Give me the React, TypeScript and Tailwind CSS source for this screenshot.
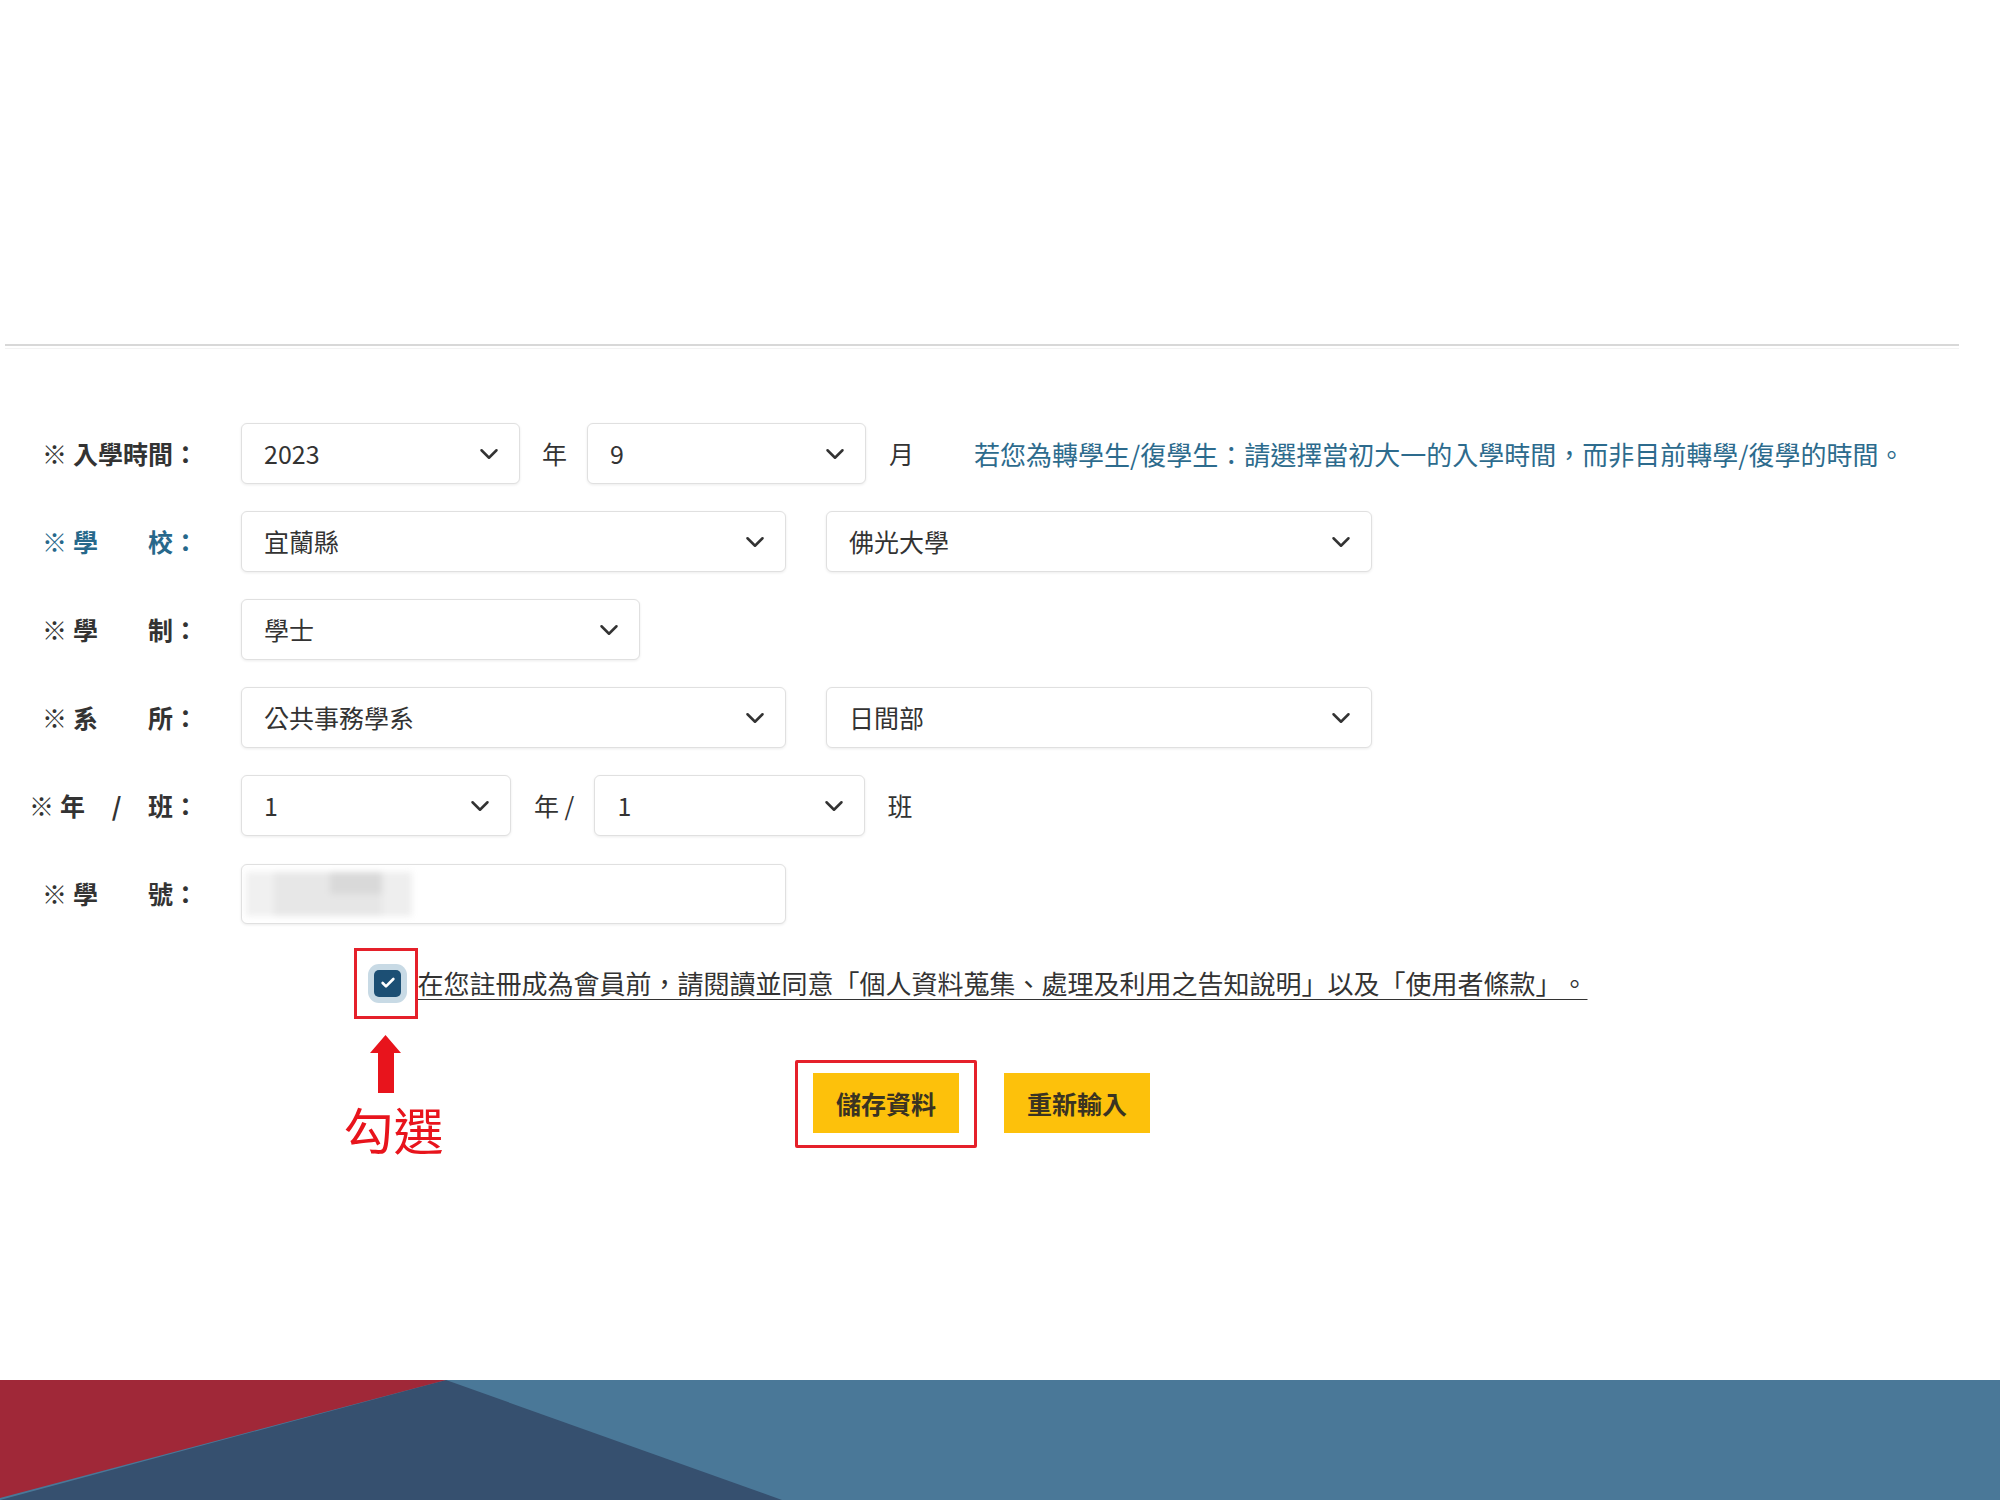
import { Check, ChevronDown } from "lucide-react";

function Select({ value, className }: { value: string; className: string }) {
  return (
    <div
      className={`flex h-[61px] items-center justify-between rounded-[6px] border border-[#e0e0e0] bg-white pr-[15px] pl-[22px] shadow-[0_1px_3px_rgba(0,0,0,0.08)] ${className}`}
    >
      <span className="text-[#333] leading-none">{value}</span>
      <ChevronDown className="text-[#333]" size={30} strokeWidth={2} />
    </div>
  );
}

function Label({ children, color = "text-[#333]" }: { children: React.ReactNode; color?: string }) {
  return (
    <div className={`flex w-[198px] shrink-0 items-center justify-end font-bold leading-none ${color}`}>
      <span>※</span>
      <span className="ml-[6px] flex items-center">{children}</span>
      <span>：</span>
    </div>
  );
}

function Spread({ items, w }: { items: string[]; w: string }) {
  return (
    <span className={`flex justify-between ${w}`}>
      {items.map((t) => (
        <span key={t}>{t}</span>
      ))}
    </span>
  );
}

export default function App() {
  return (
    <div className="flex h-[1500px] w-[2000px] flex-col bg-white font-['Noto_Sans_CJK_TC','Noto_Sans',sans-serif] text-[25px] text-[#333] [text-spacing-trim:space-all]">
      <div className="h-[344px] shrink-0" />
      <div className="ml-[5px] h-[2px] w-[1954px] bg-[#d8d8d8]" />
      <div className="mt-[2px] ml-[5px] h-px w-[1954px] bg-[#f3f3f3]" />

      {/* form rows */}
      <div className="mt-[74px] flex flex-col gap-[27px]">
        <div className="flex h-[61px] items-center">
          <Label>入學時間</Label>
          <Select className="ml-[43px] w-[279px]" value="2023" />
          <span className="ml-[22px] leading-none">年</span>
          <Select className="ml-[20px] w-[279px]" value="9" />
          <span className="ml-[23px] leading-none">月</span>
          <span className="ml-[60px] text-[#2d6b8d] text-[26px] leading-none">
            若您為轉學生/復學生：請選擇當初大一的入學時間，而非目前轉學/復學的時間。
          </span>
        </div>

        <div className="flex h-[61px] items-center">
          <Label color="text-[#27688b]">
            <Spread items={["學", "校"]} w="w-[100px]" />
          </Label>
          <Select className="ml-[43px] w-[545px]" value="宜蘭縣" />
          <Select className="ml-[40px] w-[546px]" value="佛光大學" />
        </div>

        <div className="flex h-[61px] items-center">
          <Label>
            <Spread items={["學", "制"]} w="w-[100px]" />
          </Label>
          <Select className="ml-[43px] w-[399px]" value="學士" />
        </div>

        <div className="flex h-[61px] items-center">
          <Label>
            <Spread items={["系", "所"]} w="w-[100px]" />
          </Label>
          <Select className="ml-[43px] w-[545px]" value="公共事務學系" />
          <Select className="ml-[40px] w-[546px]" value="日間部" />
        </div>

        <div className="flex h-[61px] items-center">
          <Label>
            <Spread items={["年", "/", "班"]} w="w-[113px]" />
          </Label>
          <Select className="ml-[43px] w-[270px]" value="1" />
          <span className="ml-[23px] leading-none">年 /</span>
          <Select className="ml-[20px] w-[271px]" value="1" />
          <span className="ml-[22px] leading-none">班</span>
        </div>

        <div className="flex h-[61px] items-center">
          <Label>
            <Spread items={["學", "號"]} w="w-[100px]" />
          </Label>
          <div className="ml-[43px] flex h-[60px] w-[545px] items-center overflow-hidden rounded-[6px] border border-[#e0e0e0] bg-white pl-[4px] shadow-[0_1px_3px_rgba(0,0,0,0.08)]">
            {/* blurred student id */}
            <div className="flex h-[44px] w-[166px] blur-[3px]">
              <div className="h-full w-[28px] bg-[#f0f0f0]" />
              <div className="h-full w-[56px] bg-[#e7e7e7]" />
              <div className="flex h-full w-[52px] flex-col">
                <div className="h-1/2 bg-[#d9d9d9]" />
                <div className="h-1/2 bg-[#e6e6e6]" />
              </div>
              <div className="h-full w-[30px] bg-[#eeeeee]" />
            </div>
          </div>
        </div>
      </div>

      {/* agreement */}
      <div className="mt-[39px] flex h-[40px] w-[1962px] items-center justify-center">
        <div className="relative h-[27px] w-[27px]">
          <div className="flex h-[27px] w-[27px] items-center justify-center rounded-[5px] bg-[#1c4f74] ring-[6px] ring-[#c8dae5]">
            <Check className="text-white" size={16} strokeWidth={4} />
          </div>
          <div className="absolute -top-[22px] -left-[20px] h-[71px] w-[64px] border-[3px] border-[#e5202a]" />
          <svg className="absolute top-[65px] -left-[4px]" height="58" viewBox="0 0 31 58" width="31">
            <polygon fill="#e8141c" points="15.5,0 31,18 24,18 24,58 8,58 8,18 0,18" />
          </svg>
          <span className="absolute top-[133px] -left-[31px] whitespace-nowrap text-[#e8141c] text-[50px] leading-none">
            勾選
          </span>
        </div>
        <span className="ml-[16px] text-[#333] text-[26px] leading-none underline decoration-[1px] underline-offset-[5px]">
          在您註冊成為會員前，請閱讀並同意「個人資料蒐集、處理及利用之告知說明」以及「使用者條款」。
        </span>
      </div>

      {/* buttons */}
      <div className="mt-[70px] flex w-[1963px] justify-center gap-[45px]">
        <div className="relative">
          <button className="h-[60px] w-[146px] bg-[#fdc10b] font-bold text-[#3a3322] leading-none" type="button">
            儲存資料
          </button>
          <div className="absolute -top-[13px] -left-[18px] h-[88px] w-[182px] rounded-[2px] border-[3px] border-[#e5202a]" />
        </div>
        <button className="h-[60px] w-[146px] bg-[#fdc10b] font-bold text-[#3a3322] leading-none" type="button">
          重新輸入
        </button>
      </div>

      {/* footer banner */}
      <div className="mt-auto h-[120px] w-full bg-[#4a7898]">
        <svg className="block" height="120" viewBox="0 0 2000 120" width="2000">
          <polygon fill="#36506f" points="446,0 782,120 0,120" />
          <polygon fill="#a02838" points="0,0 446,0 0,118" />
        </svg>
      </div>
    </div>
  );
}
